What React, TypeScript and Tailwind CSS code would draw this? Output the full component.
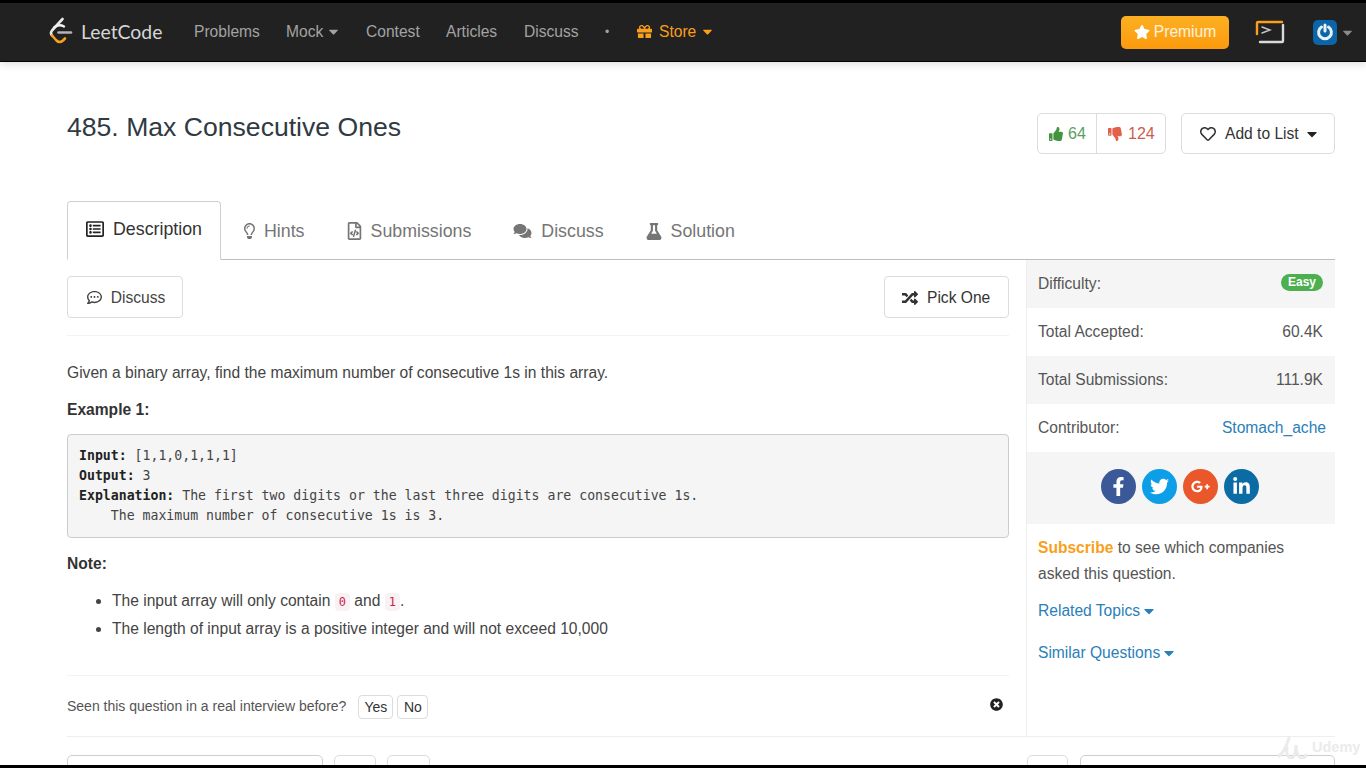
import {
  FaCaretDown,
  FaComments,
  FaFacebookF,
  FaFlask,
  FaGift,
  FaGooglePlusG,
  FaLinkedinIn,
  FaRandom,
  FaRegCommentDots,
  FaRegFileCode,
  FaRegHeart,
  FaRegLightbulb,
  FaRegListAlt,
  FaStar,
  FaThumbsDown,
  FaThumbsUp,
  FaTimesCircle,
  FaTwitter,
} from 'react-icons/fa';

function Logo() {
  return (
    <svg width="24" height="30" viewBox="0 0 24 30" fill="none" strokeLinecap="round" strokeLinejoin="round">
      <path d="M13.5 2 L3 13.5 Q1 16 3 18.5" stroke="#e8e8e8" strokeWidth="2.6" />
      <path d="M5 10.5 Q10 6.5 15 9.5" stroke="#f0f0f0" strokeWidth="2.4" />
      <path d="M3 18.5 L7.5 23.5 Q10.5 26.5 14 23.5 L16 21.5" stroke="#f89f1b" strokeWidth="2.6" />
      <path d="M9.5 15.5 H22" stroke="#b3b3b3" strokeWidth="2.6" />
    </svg>
  );
}

function Nav() {
  return (
    <header className="h-[62px] bg-[#212121] border-t-[3px] border-b border-t-black border-b-black flex items-center pl-[49px] pr-[11px] shadow-[0_3px_8px_rgba(0,0,0,0.12)]">
      <Logo />
      <span className="ml-[8px] w-[107px] text-[19.4px] text-[#d6d6d6] font-['Lato',sans-serif]">LeetCode</span>
      <nav className="ml-[6px] flex items-center text-[15.6px] text-[#a3a3a3]">
        <span className="w-[92px]">Problems</span>
        <span className="w-[80px] flex items-center gap-[3px]">Mock <FaCaretDown className="text-[15px]" /></span>
        <span className="w-[80px]">Contest</span>
        <span className="w-[78px]">Articles</span>
        <span className="w-[81px]">Discuss</span>
        <span className="w-[32px] text-[12px]">•</span>
        <span className="flex items-center text-[#f89f1b]">
          <FaGift className="text-[15px] mr-[7px]" />
          Store
          <FaCaretDown className="text-[15px] ml-[4px]" />
        </span>
      </nav>
      <div className="ml-auto flex items-center">
        <button className="w-[108px] h-[33px] rounded-[5px] bg-gradient-to-b from-[#fdb022] to-[#fb9a0c] text-white/85 text-[15.6px] flex items-center justify-center gap-[4px]">
          <FaStar className="text-[16px] text-white" />
          Premium
        </button>
        <svg className="ml-[26px]" width="30" height="24" viewBox="0 0 30 24" fill="none" strokeLinecap="round">
          <path d="M2 14 V3 Q2 2 3 2 H27" stroke="#f89f1b" strokeWidth="2.4" />
          <path d="M28 5 V21 Q28 22 27 22 H5" stroke="#d9d9d9" strokeWidth="2.4" />
          <path d="M7 7 L15 10 L7 13" stroke="#c8c8c8" strokeWidth="1.4" />
        </svg>
        <div className="ml-[28px] w-[24px] h-[25px] rounded-[5px] bg-[#0b65a8] flex items-center justify-center">
          <svg width="18" height="18" viewBox="0 0 18 18" fill="none" stroke="#e8f1f8" strokeWidth="3" strokeLinecap="round">
            <path d="M5.5 4 A6.4 6.4 0 1 0 12.5 4" />
            <path d="M9 2 V8" />
          </svg>
        </div>
        <FaCaretDown className="ml-[3px] text-[15px] text-[#8a8a8a]" />
      </div>
    </header>
  );
}

function VoteBar() {
  return (
    <div className="flex items-start justify-between pt-[51px]">
      <h1 className="text-[26.6px] leading-[30px] text-[#2f3a42] mt-[-1px]">485. Max Consecutive Ones</h1>
      <div className="flex">
        <div className="flex h-[41px] border border-[#dcdcdc] rounded-[5px] text-[16px]">
          <span className="w-[59px] flex items-center pl-[11px] gap-[5px] text-[#5a9e62] border-r border-[#dcdcdc]">
            <FaThumbsUp className="text-[14px] text-[#43943f]" /> 64
          </span>
          <span className="w-[68px] flex items-center pl-[11px] gap-[6px] text-[#c9604f]">
            <FaThumbsDown className="text-[14px] text-[#e0604a]" /> 124
          </span>
        </div>
        <div className="ml-[15px] w-[154px] h-[41px] border border-[#dcdcdc] rounded-[5px] flex items-center pl-[18px] text-[15.6px] text-[#333]">
          <FaRegHeart className="text-[16px] mr-[9px]" />
          Add to List
          <FaCaretDown className="text-[16px] ml-[5px] text-[#222]" />
        </div>
      </div>
    </div>
  );
}

function Tabs() {
  const tabs = [
    { label: 'Hints', icon: <FaRegLightbulb className="w-[11px] h-[16px]" /> },
    { label: 'Submissions', icon: <FaRegFileCode className="w-[15px] h-[18px]" /> },
    { label: 'Discuss', icon: <FaComments className="w-[19px] h-[16px]" /> },
    { label: 'Solution', icon: <FaFlask className="w-[16px] h-[17px]" /> },
  ];
  return (
    <div className="mt-[47px] flex h-[59px] border-b border-[#bdbdbd]">
      <div className="w-[154px] h-[59px] border border-[#cfcfcf] border-b-white rounded-t-[4px] bg-white flex items-center justify-center gap-[9px] text-[17.8px] text-[#333] pb-[3px]">
        <FaRegListAlt className="text-[18px] text-[#222]" />
        Description
      </div>
      <div className="ml-[23px] flex gap-[42px] pt-[2px]">
        {tabs.map((t) => (
          <div key={t.label} className="flex items-center gap-[9px] text-[17.8px] text-[#757575]">
            {t.icon}
            {t.label}
          </div>
        ))}
      </div>
    </div>
  );
}

function Question() {
  return (
    <div className="w-[960px] border-r border-[#eeeeee] pr-[17px] text-[#444]">
      <div className="pt-[16px] pb-[17px] flex justify-between border-b border-[#f3f3f3]">
        <button className="w-[116px] h-[42px] border border-[#dcdcdc] rounded-[4px] flex items-center justify-center gap-[9px] pl-[2px] pt-[1px] text-[15.6px] text-[#444]">
          <FaRegCommentDots className="text-[15px]" />
          Discuss
        </button>
        <button className="w-[125px] h-[42px] border border-[#dcdcdc] rounded-[4px] flex items-center pl-[17px] pt-[1px] gap-[9px] text-[15.6px] text-[#333]">
          <FaRandom className="text-[16px]" />
          Pick One
        </button>
      </div>

      <p className="mt-[27px] text-[15.6px] leading-[20px] text-[#444]">
        Given a binary array, find the maximum number of consecutive 1s in this array.
      </p>
      <p className="mt-[17px] text-[15.6px] leading-[20px] font-bold text-[#333]">Example 1:</p>
      <pre className="mt-[14px] h-[104px] border border-[#cccccc] rounded-[4px] bg-[#f5f5f5] pl-[11px] pt-[11px] font-['DejaVu_Sans_Mono',monospace] text-[13.2px] leading-[20px] text-[#444]">
        <b className="text-[#222]">Input:</b> [1,1,0,1,1,1]{'\n'}
        <b className="text-[#222]">Output:</b> 3{'\n'}
        <b className="text-[#222]">Explanation:</b> The first two digits or the last three digits are consecutive 1s.{'\n'}
        {'    '}The maximum number of consecutive 1s is 3.
      </pre>
      <p className="mt-[16px] text-[15.6px] leading-[20px] font-bold text-[#333]">Note:</p>
      <ul className="mt-[13px] pl-[45px] list-disc text-[15.6px] leading-[28px] text-[#444]">
        <li>
          The input array will only contain{' '}
          <code className="px-[4px] py-[2px] rounded-[4px] bg-[#f9f2f4] text-[#c7254e] font-['DejaVu_Sans_Mono',monospace] text-[12px] leading-none">0</code>{' '}
          and{' '}
          <code className="px-[4px] py-[2px] rounded-[4px] bg-[#f9f2f4] text-[#c7254e] font-['DejaVu_Sans_Mono',monospace] text-[12px] leading-none">1</code>.
        </li>
        <li>The length of input array is a positive integer and will not exceed 10,000</li>
      </ul>

      <div className="mt-[32px] h-[61px] border-t border-[#f3f3f3] flex items-center text-[14px] text-[#555]">
        Seen this question in a real interview before?
        <button className="ml-[12px] w-[35px] h-[24px] border border-[#dcdcdc] rounded-[4px] text-[14px] text-[#333] mt-[2px]">Yes</button>
        <button className="ml-[4px] w-[31px] h-[24px] border border-[#dcdcdc] rounded-[4px] text-[14px] text-[#333] mt-[2px]">No</button>
        <FaTimesCircle className="ml-auto mr-[6px] text-[13px] text-[#222] mb-[4px]" />
      </div>
    </div>
  );
}

function StatRow({ label, value, gray }: { label: string; value: React.ReactNode; gray?: boolean }) {
  return (
    <div className={`h-[48px] flex items-center justify-between pl-[11px] pr-[12px] text-[15.6px] text-[#555] ${gray ? 'bg-[#f5f5f5]' : 'bg-white'}`}>
      <span>{label}</span>
      {value}
    </div>
  );
}

function Sidebar() {
  const social = [
    { icon: <FaFacebookF />, bg: 'bg-[#3b5998]' },
    { icon: <FaTwitter />, bg: 'bg-[#0d9ee8]' },
    { icon: <FaGooglePlusG />, bg: 'bg-[#e9572b]' },
    { icon: <FaLinkedinIn />, bg: 'bg-[#0a6ba5]' },
  ];
  return (
    <aside className="w-[308px]">
      <StatRow
        gray
        label="Difficulty:"
        value={<span className="h-[17px] px-[7px] rounded-full bg-[#4caf50] text-white text-[12px] leading-[17px] font-bold mb-[3px]">Easy</span>}
      />
      <StatRow label="Total Accepted:" value={<span>60.4K</span>} />
      <StatRow gray label="Total Submissions:" value={<span>111.9K</span>} />
      <StatRow label="Contributor:" value={<a className="text-[#2a80b9] mr-[-3px]">Stomach_ache</a>} />
      <div className="h-[72px] bg-[#f5f5f5] flex items-center justify-center gap-[6px] pr-[2px] pb-[3px]">
        {social.map((s, i) => (
          <span key={i} className={`w-[35px] h-[35px] rounded-full ${s.bg} text-white text-[19px] flex items-center justify-center`}>
            {s.icon}
          </span>
        ))}
      </div>
      <p className="mt-[11px] pl-[11px] pr-[20px] text-[15.6px] leading-[26px] text-[#555]">
        <b className="text-[#f89f1b]">Subscribe</b>
        <span> to see which companies</span>
        <br />
        <span>asked this question.</span>
      </p>
      <a className="mt-[12px] ml-[11px] flex items-center gap-[1px] text-[15.6px] leading-[24px] text-[#2a80b9]">
        Related Topics <FaCaretDown className="text-[16px]" />
      </a>
      <a className="mt-[18px] ml-[11px] flex items-center gap-[1px] text-[15.6px] leading-[24px] text-[#2a80b9]">
        Similar Questions <FaCaretDown className="text-[16px]" />
      </a>
    </aside>
  );
}

export default function App() {
  return (
    <div className="relative h-[768px] overflow-hidden bg-white font-['Liberation_Sans',sans-serif]">
      <Nav />
      <main className="pl-[67px] pr-[31px]">
        <VoteBar />
        <Tabs />
        <div className="flex">
          <Question />
          <Sidebar />
        </div>
        <div className="border-t border-[#eeeeee] pt-[18px] flex">
          <div className="w-[256px] h-[20px] border border-[#cfcfcf] rounded-t-[5px]" />
          <div className="ml-[11px] w-[42px] h-[20px] border border-[#dcdcdc] rounded-t-[5px]" />
          <div className="ml-[11px] w-[43px] h-[20px] border border-[#dcdcdc] rounded-t-[5px]" />
          <div className="ml-auto w-[41px] h-[20px] border border-[#dcdcdc] rounded-t-[5px]" />
          <div className="ml-[12px] w-[255px] h-[20px] border border-[#cfcfcf] rounded-t-[5px]" />
        </div>
      </main>
      {/* video watermark and letterbox */}
      <div className="absolute left-[1278px] top-[736px] flex items-center gap-[5px] text-[#ebebeb]">
        <svg width="29" height="23" viewBox="0 0 29 23" fill="none" stroke="currentColor" strokeWidth="3" strokeLinecap="round">
          <path d="M1 20 C6 16 9 9 11 2" />
          <path d="M9 12 C8 18 10 22 13 22 C16 22 18 17 18 9 C18 16 20 22 24 22 C26 22 28 20 28 19" />
        </svg>
        <span className="text-[14.5px] font-bold">Udemy</span>
      </div>
      <div className="absolute inset-x-0 bottom-0 h-[3px] bg-black" />
    </div>
  );
}
